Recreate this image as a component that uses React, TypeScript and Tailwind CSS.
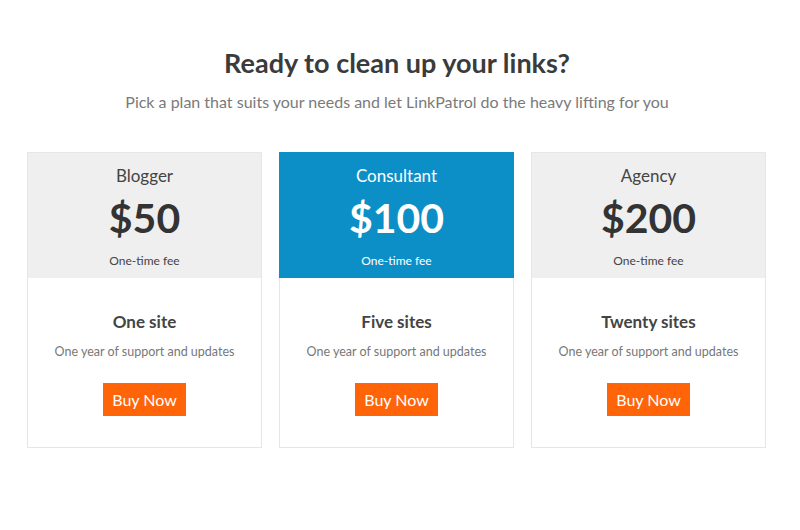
import React from "react";

const plans = [
  { name: "Blogger", price: "$50", sites: "One site", featured: false },
  { name: "Consultant", price: "$100", sites: "Five sites", featured: true },
  { name: "Agency", price: "$200", sites: "Twenty sites", featured: false },
];

export default function App() {
  return (
    <div className="w-[800px] h-[530px] bg-white" style={{ fontFamily: "Lato, 'Open Sans', sans-serif" }}>
      <div className="w-[794px] pt-[46px] text-center">
        <h1 className="text-[27px] leading-[34px] font-bold text-[#3b3b3b]">Ready to clean up your links?</h1>
        <p className="mt-[12px] text-[16px] leading-[20px] text-[#7a7a7a]">
          Pick a plan that suits your needs and let LinkPatrol do the heavy lifting for you
        </p>
      </div>
      <div className="flex gap-[17px] pl-[27px] mt-[40px]">
        {plans.map((p) => (
          <div key={p.name} className="w-[235px] h-[296px] border border-[#e6e6e6] flex flex-col">
            <div
              className={
                "h-[125px] flex flex-col items-center pt-[12px] " +
                (p.featured ? "bg-[#0c8fc7] text-white -mx-px -mt-px h-[126px] pt-[13px]" : "bg-[#efefef] text-[#333333]")
              }
            >
              <div className={"text-[17px] leading-[22px] " + (p.featured ? "text-white" : "text-[#444444]")}>{p.name}</div>
              <div className="text-[41px] leading-[48px] font-bold mt-[7px]">{p.price}</div>
              <div className={"text-[12px] leading-[16px] mt-[11px] " + (p.featured ? "text-white" : "text-[#444444]")}>One-time fee</div>
            </div>
            <div className="flex-1 flex flex-col items-center bg-white">
              <div className="mt-[33px] text-[17px] leading-[22px] font-bold text-[#444444]">{p.sites}</div>
              <div className="mt-[11px] text-[12.5px] leading-[16px] text-[#777777]">One year of support and updates</div>
              <button className="mt-[23px] w-[83px] h-[33px] bg-[#ff6409] text-white text-[16px] leading-[20px]">
                Buy Now
              </button>
            </div>
          </div>
        ))}
      </div>
    </div>
  );
}
